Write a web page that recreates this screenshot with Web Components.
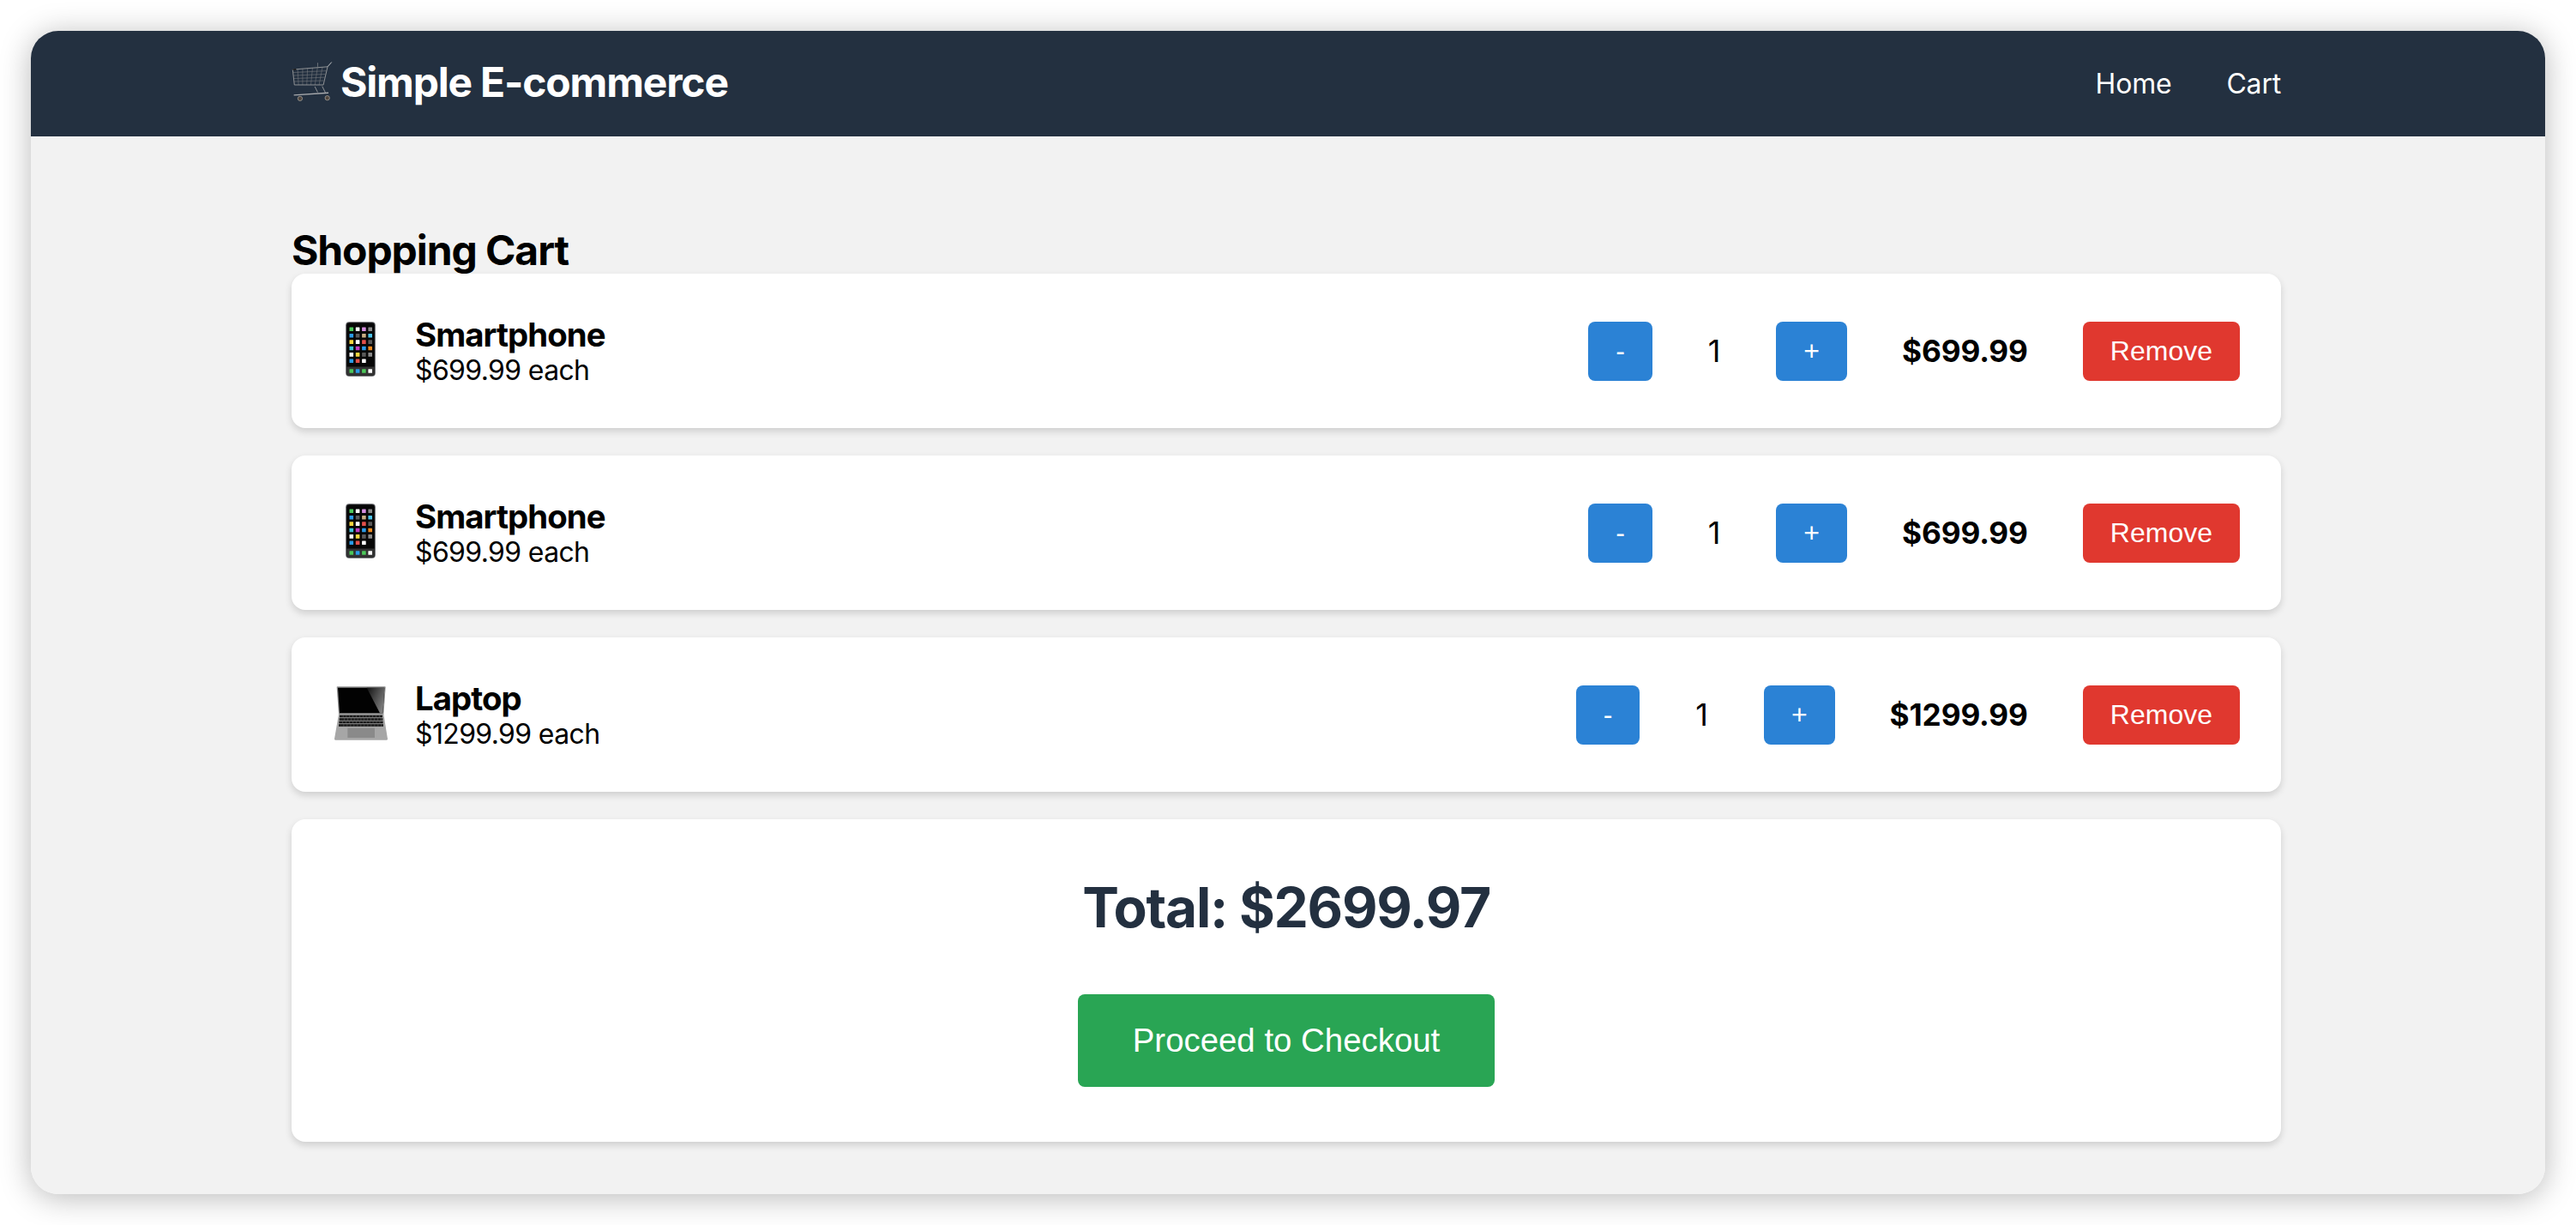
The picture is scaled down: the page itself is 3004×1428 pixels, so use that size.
<!DOCTYPE html>
<html lang="en">
<head>
<meta charset="utf-8">
<title>Simple E-commerce</title>
<style>
  html, body { margin: 0; background: #fff; overflow: hidden; }
  body { font-family: Inter, "Liberation Sans", sans-serif; color: #000; }
</style>
</head>
<body>
<shop-app>
  <shop-header></shop-header>
  <h2 slot="title">Shopping Cart</h2>
  <cart-item icon="phone" price="$699.99">Smartphone</cart-item>
  <cart-item icon="phone" price="$699.99">Smartphone</cart-item>
  <cart-item icon="laptop" price="$1299.99">Laptop</cart-item>
  <cart-summary total="$2699.97"></cart-summary>
</shop-app>

<script>
const phoneDots = [
  ["#4cc85a", "#fff", "#d78fe2", "#8a8a8a"],
  ["#2a9be8", "#5a5a5a", "#c9ae84", "#4cc4ea"],
  ["#f6d63e", "#fff", "#e2504a", "#5a5a5a"],
  ["#3fc4dc", "#c23cc4", "#2a9be8", "#f08a1e"],
  ["#fff", "#f6d63e", "#5a5a5a", "#8a8a8a"],
  ["#2a9be8", "#e2504a", "#fff", null],
];
const dockDots = ["#4cc85a", "#2a9be8", "#4cc85a", "#fff"];

function phoneIcon() {
  let dots = "";
  phoneDots.forEach((row, r) => {
    row.forEach((color, c) => {
      if (color) dots += `<rect x="${17.5 + c * 7.3}" y="${6.5 + r * 7.4}" width="4.6" height="4.6" rx=".5" fill="${color}"/>`;
    });
  });
  dockDots.forEach((color, c) => {
    dots += `<rect x="${17.5 + c * 7.3}" y="55.2" width="4.6" height="4.6" rx=".5" fill="${color}"/>`;
  });
  return `<svg viewBox="0 0 64 64" width="64" height="64">
    <rect x="13.2" y="0.3" width="34.6" height="63.4" rx="4" fill="#55575c"/>
    <rect x="14.2" y="1.3" width="32.6" height="61.4" rx="3.2" fill="#070707"/>
    <path d="M14.2 52.5h32.6v7a3.2 3.2 0 0 1-3.2 3.2H17.4a3.2 3.2 0 0 1-3.2-3.2z" fill="#333"/>
    ${dots}
  </svg>`;
}

function laptopIcon() {
  let keys = "";
  for (let r = 0; r < 4; r++) {
    const y = 189 + r * 10.5;
    keys += `<rect x="${105 - r}" y="${y}" width="${150 + r * 2}" height="8" fill="#1a1a1a"/>`;
    for (let k = 1; k < 13; k++) {
      const x = 105 - r + k * (150 + r * 2) / 13 + (r % 2) * 5;
      keys += `<rect x="${x}" y="${y}" width="1.4" height="8" fill="#777"/>`;
    }
  }
  return `<svg viewBox="87 85 192 192" width="64" height="64">
    <defs><linearGradient id="glare" x1="0" y1="0" x2="1" y2="0.6">
      <stop offset="0" stop-color="#111"/><stop offset="1" stop-color="#7c7c7c"/>
    </linearGradient></defs>
    <path d="M97 89h167q2 0 2 2l-7 96H102L95 91q0-2 2-2z" fill="#8f8f8f"/>
    <path d="M99 93h163l-6 89H105z" fill="#020202"/>
    <path d="M200 93h62l-6 89h-10z" fill="url(#glare)"/>
    <path d="M102 185h157l14 87q0 4-3 4H90q-3 0-3-4z" fill="#a6a6a6"/>
    ${keys}
    <rect x="133" y="234" width="95" height="34" fill="#8a8a8a"/>
  </svg>`;
}

function cartIcon() {
  let grid = "";
  for (let i = 1; i < 7; i++) {
    const x1 = 64 + i * 17.5, x2 = 70 + i * 14.5;
    grid += `<path d="M${x1} ${117 - i * 1.4}L${x2} 172"/>`;
  }
  for (let j = 1; j < 5; j++) {
    const y = 118 + j * 10.5;
    grid += `<path d="M${65 + j} ${y}L${185 - j * 3} ${y - 7 + j}"/>`;
  }
  return `<svg viewBox="60 85 145 150" width="48" height="50">
    <g fill="none" stroke="#7d8083" stroke-width="1.6">${grid}</g>
    <g fill="none" stroke="#8f9295" stroke-width="3">
      <path d="M64 118L187 108L172 172L70 172z"/>
      <path d="M187 108L201 92" stroke="#c4c6c8"/>
      <path d="M152 94v14" stroke-width="2"/>
      <path d="M142 178l10 20M168 177l12 24"/>
      <path d="M68 208L190 200" stroke="#a8aaad" stroke-width="4"/>
    </g>
    <path d="M64 116l12-1v5H64z" fill="#111"/>
    <circle cx="90" cy="220" r="8" fill="#50463e" stroke="#b5b0a8" stroke-width="2"/>
    <circle cx="186" cy="218" r="8" fill="#50463e" stroke="#b5b0a8" stroke-width="2"/>
  </svg>`;
}

class ShopApp extends HTMLElement {
  constructor() {
    super();
    this.attachShadow({ mode: "open" }).innerHTML = `
      <style>
        :host { display: block; padding: 36px; height: 1428px; box-sizing: border-box; }
        .window {
          height: 1356px;
          border-radius: 32px;
          background: #f2f2f2;
          overflow: hidden;
          display: flex;
          flex-direction: column;
        }
        .shell { border-radius: 32px; box-shadow: 0 4px 36px rgba(0, 0, 0, 0.28); }
        main {
          width: 2320px;
          margin-left: 304px;
          padding-top: 104px;
          display: flex;
          flex-direction: column;
          gap: 32px;
        }
        ::slotted(h2) {
          margin: 0 0 -34px;
          font-size: 48px;
          line-height: 58px;
          font-weight: 700;
          letter-spacing: -1.1px;
          font-family: Inter, sans-serif;
        }
      </style>
      <div class="shell">
        <div class="window">
          <slot name="header"></slot>
          <main>
            <slot name="title"></slot>
            <slot></slot>
          </main>
        </div>
      </div>`;
  }
  connectedCallback() {
    this.querySelector("shop-header").slot = "header";
  }
}

class ShopHeader extends HTMLElement {
  constructor() {
    super();
    this.attachShadow({ mode: "open" }).innerHTML = `
      <style>
        :host { display: block; background: #233040; color: #fff; height: 123px; flex: none; }
        .bar {
          width: 2320px;
          height: 100%;
          margin-left: 304px;
          display: flex;
          align-items: center;
          justify-content: space-between;
          font-family: Inter, sans-serif;
        }
        .logo { display: flex; align-items: center; gap: 9px; font-size: 48px; font-weight: 700; line-height: 58px; letter-spacing: -1.2px; margin-top: -3px; }
        .logo svg { display: block; margin-top: -3px; }
        nav { display: flex; gap: 64px; font-size: 32px; line-height: 40px; letter-spacing: -0.2px; }
      </style>
      <div class="bar">
        <div class="logo">${cartIcon()}<span>Simple E-commerce</span></div>
        <nav><span>Home</span><span>Cart</span></nav>
      </div>`;
  }
}

class QtyButton extends HTMLElement {
  constructor() {
    super();
    this.attachShadow({ mode: "open" }).innerHTML = `
      <style>
        :host { display: block; }
        button {
          display: block;
          border: none;
          border-radius: 8px;
          height: 69px;
          padding: 0 32px;
          color: #fff;
          background: var(--fill, #2b82d5);
          font: 32px "Liberation Sans", Arial, sans-serif;
        }
      </style>
      <button><slot></slot></button>`;
  }
}

class CartItem extends HTMLElement {
  constructor() {
    super();
    const price = this.getAttribute("price");
    const icon = this.getAttribute("icon") === "laptop" ? laptopIcon() : phoneIcon();
    this.attachShadow({ mode: "open" }).innerHTML = `
      <style>
        :host {
          display: flex;
          align-items: center;
          box-sizing: border-box;
          height: 180px;
          padding: 0 48px;
          gap: 30px;
          background: #fff;
          border-radius: 16px;
          box-shadow: 0 4px 8px rgba(0, 0, 0, 0.15);
        }
        .icon { flex: none; width: 64px; height: 64px; margin: 0 0 4px 2px; }
        .icon svg { display: block; }
        .info { flex: 1; }
        .name { font-size: 38.4px; line-height: 46px; font-weight: 700; letter-spacing: -0.96px; }
        .each { font-size: 32px; line-height: 38px; letter-spacing: -0.64px; }
        .controls { display: flex; align-items: center; gap: 64px; }
        .qty { display: flex; align-items: center; }
        .count { width: 144.5px; text-align: center; font-size: 36px; line-height: 44px; }
        .line { font-size: 35.2px; font-weight: 700; line-height: 44px; letter-spacing: -0.1px; }
      </style>
      <div class="icon">${icon}</div>
      <div class="info">
        <div class="name"><slot></slot></div>
        <div class="each">${price} each</div>
      </div>
      <div class="controls">
        <div class="qty">
          <qty-button>-</qty-button>
          <span class="count">1</span>
          <qty-button>+</qty-button>
        </div>
        <span class="line">${price}</span>
        <qty-button style="--fill: #e0382f">Remove</qty-button>
      </div>`;
  }
}

class CartSummary extends HTMLElement {
  constructor() {
    super();
    this.attachShadow({ mode: "open" }).innerHTML = `
      <style>
        :host {
          display: flex;
          flex-direction: column;
          align-items: center;
          box-sizing: border-box;
          height: 376px;
          padding-top: 64px;
          background: #fff;
          border-radius: 16px;
          box-shadow: 0 4px 8px rgba(0, 0, 0, 0.15);
        }
        .total { font-size: 64px; line-height: 78px; font-weight: 700; color: #233040; letter-spacing: -1.28px; }
        button {
          margin-top: 62px;
          width: 486px;
          height: 108px;
          border: none;
          border-radius: 8px;
          color: #fff;
          background: #29a554;
          font: 38.4px "Liberation Sans", Arial, sans-serif;
        }
      </style>
      <div class="total">Total: ${this.getAttribute("total")}</div>
      <button>Proceed to Checkout</button>`;
  }
}

customElements.define("qty-button", QtyButton);
customElements.define("shop-header", ShopHeader);
customElements.define("cart-item", CartItem);
customElements.define("cart-summary", CartSummary);
customElements.define("shop-app", ShopApp);
</script>
</body>
</html>
